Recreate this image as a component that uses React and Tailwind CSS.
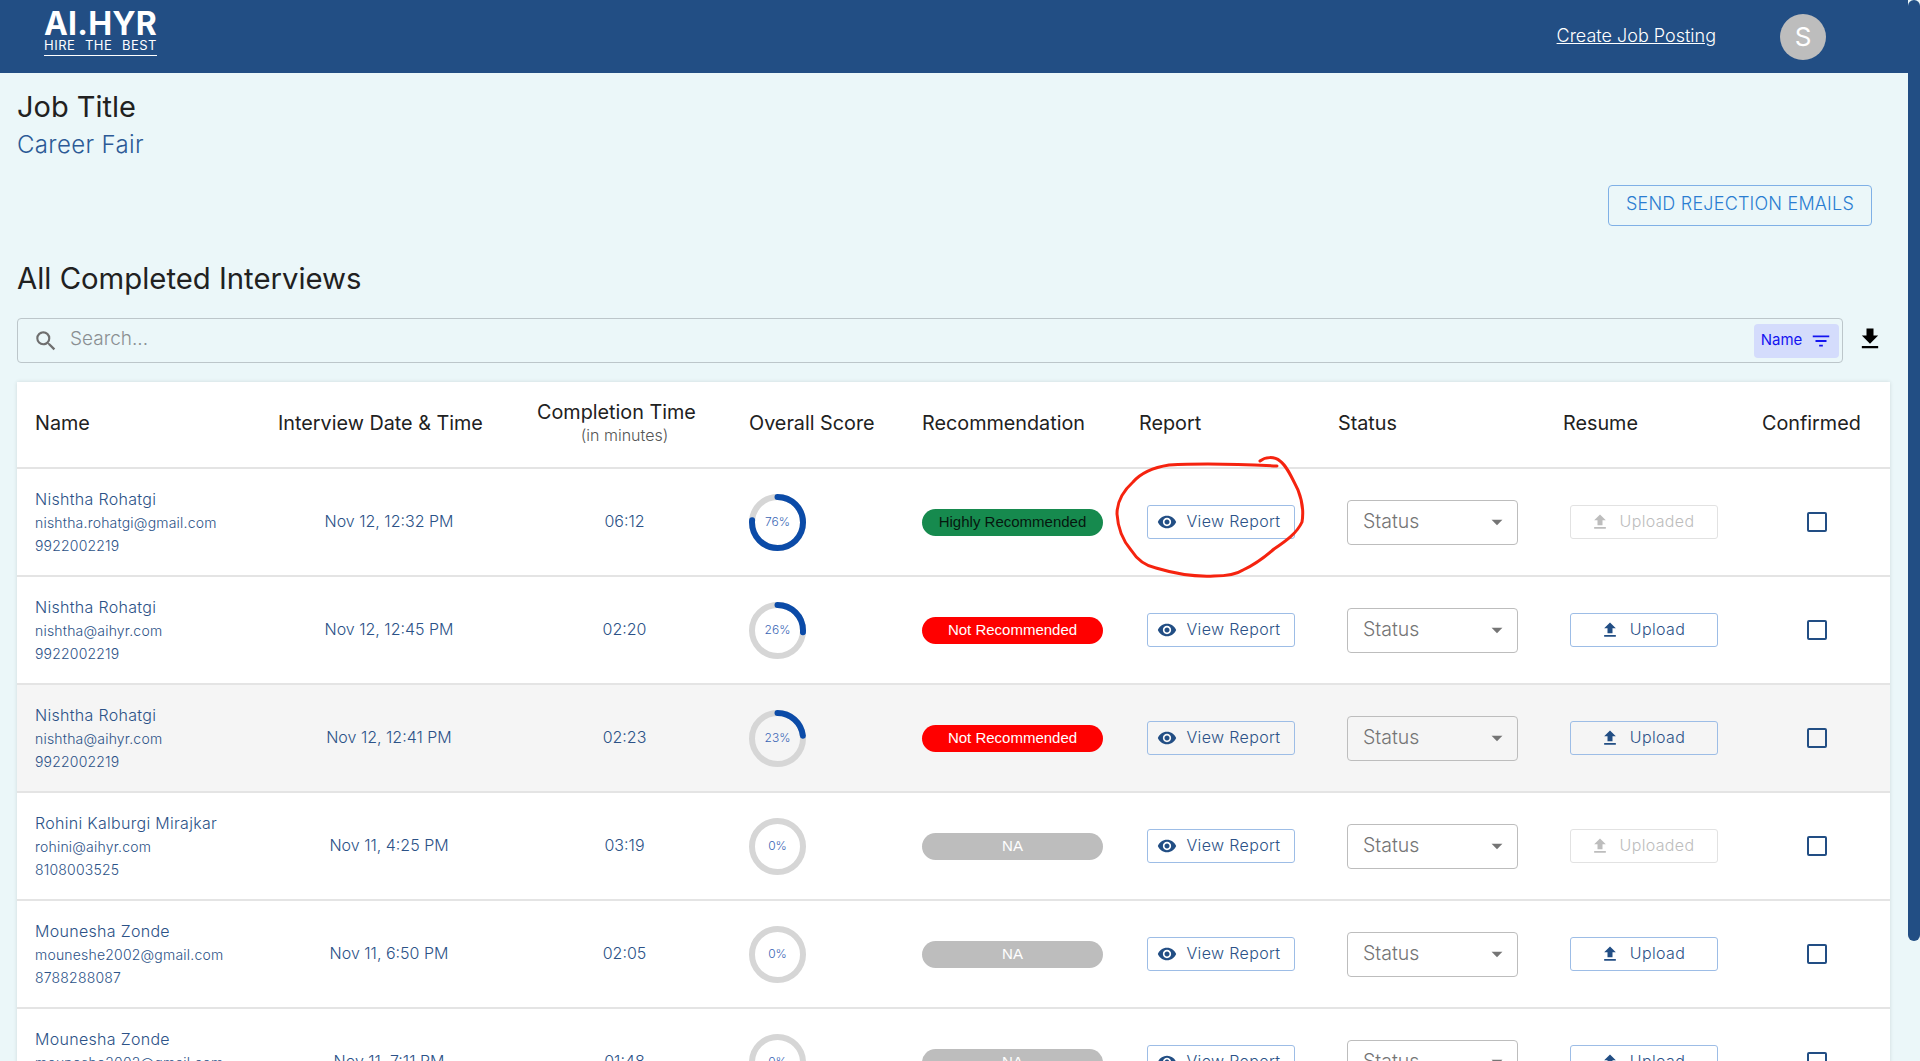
import React from 'react';
import {
  MdVisibility,
  MdFileUpload,
  MdArrowDropDown,
  MdFilterList,
  MdFileDownload,
  MdSearch,
} from 'react-icons/md';

const gridCols =
  'grid grid-cols-[245px_254px_217px_173px_217px_199px_225px_199px_144px]';

const interviews = [
  { name: 'Nishtha Rohatgi', email: 'nishtha.rohatgi@gmail.com', phone: '9922002219', date: 'Nov 12, 12:32 PM', time: '06:12', score: 76, rec: 'high', uploaded: true },
  { name: 'Nishtha Rohatgi', email: 'nishtha@aihyr.com', phone: '9922002219', date: 'Nov 12, 12:45 PM', time: '02:20', score: 26, rec: 'not', uploaded: false },
  { name: 'Nishtha Rohatgi', email: 'nishtha@aihyr.com', phone: '9922002219', date: 'Nov 12, 12:41 PM', time: '02:23', score: 23, rec: 'not', uploaded: false, hover: true },
  { name: 'Rohini Kalburgi Mirajkar', email: 'rohini@aihyr.com', phone: '8108003525', date: 'Nov 11, 4:25 PM', time: '03:19', score: 0, rec: 'na', uploaded: true },
  { name: 'Mounesha Zonde', email: 'mouneshe2002@gmail.com', phone: '8788288087', date: 'Nov 11, 6:50 PM', time: '02:05', score: 0, rec: 'na', uploaded: false },
  { name: 'Mounesha Zonde', email: 'mouneshe2002@gmail.com', phone: '8788288087', date: 'Nov 11, 7:11 PM', time: '01:48', score: 0, rec: 'na', uploaded: false },
];

const ScoreRing = ({ score }) => {
  const r = 25.5;
  const c = 2 * Math.PI * r;
  return (
    <div className="relative w-[57px] h-[57px]">
      <svg width="57" height="57" viewBox="0 0 57 57" className="-rotate-90">
        <circle cx="28.5" cy="28.5" r={r} fill="none" stroke="#d6d6d6" strokeWidth="6" />
        {score > 0 && (
          <circle
            cx="28.5"
            cy="28.5"
            r={r}
            fill="none"
            stroke="#0b4ba8"
            strokeWidth="6"
            strokeLinecap="round"
            strokeDasharray={`${(c * score) / 100} ${c}`}
          />
        )}
      </svg>
      <span className="absolute inset-0 flex items-center justify-center text-[12px] text-[#3a66b5]">
        {score}%
      </span>
    </div>
  );
};

const RecPill = ({ rec }) => {
  const styles = {
    high: 'bg-[#168a4e] text-[#06170f]',
    not: 'bg-[#ff0000] text-white',
    na: 'bg-[#bdbdbd] text-white',
  };
  const labels = { high: 'Highly Recommended', not: 'Not Recommended', na: 'NA' };
  return (
    <div className={`w-[181px] h-[27px] rounded-full flex items-center justify-center font-['Liberation_Sans',sans-serif] text-[15px] ${styles[rec]}`}>
      {labels[rec]}
    </div>
  );
};

const Row = ({ item }) => (
  <div className={`${gridCols} h-[108px] items-center border-b-2 border-[#e4e4e4] ${item.hover ? 'bg-[#f5f5f5]' : 'bg-white'}`}>
    <div className="pl-[18px] text-[#2c5287]">
      <div className="text-[16px] leading-[23px] tracking-[0.3px] whitespace-nowrap">{item.name}</div>
      <div className="text-[14px] leading-[23px] tracking-[0.2px] whitespace-nowrap">{item.email}</div>
      <div className="text-[14px] leading-[23px] tracking-[0.2px]">{item.phone}</div>
    </div>
    <div className="text-center text-[16px] text-[#2c5287] whitespace-nowrap -mt-[3px]">{item.date}</div>
    <div className="text-center text-[16px] text-[#2c5287] -mt-[3px]">{item.time}</div>
    <div className="pl-[16px]">
      <ScoreRing score={item.score} />
    </div>
    <div className="pl-[16px]">
      <RecPill rec={item.rec} />
    </div>
    <div className="pl-[24px]">
      <button className="w-[148px] h-[34px] pr-[5px] flex items-center justify-center gap-[10px] bg-transparent border border-[#9dbde6] rounded-[3px] text-[16px] text-[#2c5287] tracking-[0.35px]">
        <MdVisibility className="w-[20px] h-[20px] text-[#224e84]" />
        <span className="-mt-[2px]">View Report</span>
      </button>
    </div>
    <div className="pl-[25px]">
      <div className="w-[171px] h-[45px] pl-[15px] pr-[7px] flex items-center justify-between border-[1.5px] border-[#bdbdbd] rounded-[4px] text-[19.5px] text-[#757575]">
        <span className="-mt-[1px]">Status</span>
        <MdArrowDropDown className="w-[26px] h-[26px] text-[#757575]" />
      </div>
    </div>
    <div className="pl-[23px]">
      {item.uploaded ? (
        <button className="w-[148px] h-[34px] pr-[4px] flex items-center justify-center gap-[10px] border border-[#e2e2e2] rounded-[3px] text-[16px] text-[#bdbdbd] tracking-[0.35px]">
          <MdFileUpload className="w-[20px] h-[20px] text-[#bdbdbd]" />
          <span className="-mt-[2px]">Uploaded</span>
        </button>
      ) : (
        <button className="w-[148px] h-[34px] pr-[3px] flex items-center justify-center gap-[10px] border border-[#9dbde6] rounded-[3px] text-[16px] text-[#2c5287] tracking-[0.35px]">
          <MdFileUpload className="w-[20px] h-[20px] text-[#224e84]" />
          <span className="-mt-[2px]">Upload</span>
        </button>
      )}
    </div>
    <div className="pl-[61px]">
      <div className="w-[20px] h-[20px] border-2 border-[#224e84] rounded-[2px]" />
    </div>
  </div>
);

export default function App() {
  return (
    <div className="relative flex h-[1061px] overflow-hidden bg-[#ebf7f9] font-['Inter',sans-serif] font-light">
      <div className="flex-1 min-w-0">
        {/* Header */}
        <header className="h-[73px] bg-[#224e84] flex items-center text-white">
          <div className="ml-[44px] w-[113px] -mt-[8px]">
            <div className="font-bold text-[32px] leading-[27px] tracking-[0.2px] whitespace-nowrap">AI.HYR</div>
            <div className="flex justify-between border-b border-white text-[13px] leading-[17px] font-normal tracking-[0.5px] pb-[1px]">
              <span>HIRE</span>
              <span>THE</span>
              <span>BEST</span>
            </div>
          </div>
          <a className="ml-auto -mt-[2px] text-[18px] underline whitespace-nowrap">Create Job Posting</a>
          <div className="ml-[64px] mr-[82px] w-[46px] h-[46px] rounded-full bg-[#bdbdbd] flex items-center justify-center text-[26px] font-normal">
            S
          </div>
        </header>

        <main className="pl-[17px] pr-[18px]">
          <h2 className="mt-[16px] text-[29px] leading-[36px] font-normal text-[#212121]">Job Title</h2>
          <p className="mt-[5px] text-[24px] leading-[30px] tracking-[0.35px] text-[#2c5a96]">Career Fair</p>

          <div className="mt-[25px] mr-[18px] flex justify-end">
            <button className="w-[264px] h-[41px] border border-[#7fb0e6] rounded-[4px] text-[18px] uppercase text-[#2a7dd1] tracking-[0.2px] pb-[4px]">
              Send Rejection Emails
            </button>
          </div>

          <h3 className="mt-[33px] text-[29.3px] leading-[40px] font-normal text-[#212121]">All Completed Interviews</h3>

          {/* Search */}
          <div className="mt-[19px] flex items-center">
            <div className="w-[1826px] h-[45px] flex items-center border-[1.5px] border-[#bcc6ca] rounded-[4px] pl-[15px] pr-[3px]">
              <MdSearch className="w-[26px] h-[26px] text-[#6f6f6f]" />
              <span className="ml-[11px] -mt-[3px] text-[19px] text-[#8a8f92]">Search...</span>
              <div className="ml-auto w-[85px] h-[34px] rounded-[4px] bg-[#d4dcfc] flex items-center justify-center gap-[8px] text-[15px] font-normal text-[#1414f0]">
                Name
                <MdFilterList className="w-[22px] h-[22px]" />
              </div>
            </div>
            <MdFileDownload className="ml-[13px] -mt-[3px] w-[28px] h-[28px] text-black" />
          </div>

          {/* Table */}
          <div className="mt-[19px] w-[1873px] bg-white shadow-[0_0_4px_rgba(0,0,0,0.12)]">
            <div className={`${gridCols} h-[87px] items-center border-b-2 border-[#e4e4e4] text-[19.8px] font-normal text-[#212121] whitespace-nowrap`}>
              <div className="pl-[18px] -mt-[2px]">Name</div>
              <div className="pl-[16px] -mt-[2px]">Interview Date &amp; Time</div>
              <div className="-mt-[2px]">
                <div className="pl-[21px] leading-[26px] -mt-[3px]">Completion Time</div>
                <div className="text-center text-[16px] leading-[20px] font-light text-[#555555]">(in minutes)</div>
              </div>
              <div className="pl-[16px] -mt-[2px]">Overall Score</div>
              <div className="pl-[16px] -mt-[2px]">Recommendation</div>
              <div className="pl-[16px] -mt-[2px]">Report</div>
              <div className="pl-[16px] -mt-[2px]">Status</div>
              <div className="pl-[16px] -mt-[2px]">Resume</div>
              <div className="pl-[16px] -mt-[2px]">Confirmed</div>
            </div>
            {interviews.map((item, i) => (
              <Row key={i} item={item} />
            ))}
          </div>
        </main>
      </div>

      {/* Scrollbar */}
      <div className="w-[12px] shrink-0">
        <div className="h-[941px] bg-[#224e84] rounded-[6px]" />
      </div>

      {/* Hand drawn annotation */}
      <svg className="absolute left-0 top-0 pointer-events-none" width="1920" height="1061" fill="none">
        <path
          d="M1277 466 C1240 464 1200 463 1169 465 C1150 468 1140 474 1133 482 C1122 492 1117 503 1117 514 C1118 530 1125 543 1131 550 C1138 561 1146 566 1156 568 C1176 574 1196 577 1214 576 C1228 576 1237 574 1243 570 C1256 564 1266 556 1274 549 C1286 541 1297 533 1302 522 C1304 510 1302 500 1298 490 C1292 478 1287 466 1280 461 C1274 456 1265 457 1260 461"
          stroke="#f5230f"
          strokeWidth="3"
          strokeLinecap="round"
        />
      </svg>
    </div>
  );
}
